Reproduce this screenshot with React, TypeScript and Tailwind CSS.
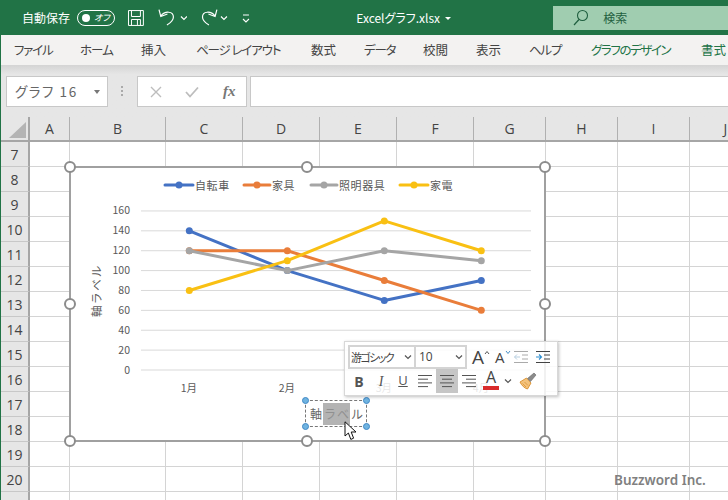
import React from "react";

const tabs = [
  { t: "ファイル", c: "w-[38px] text-[#444] tracking-[-1.2px]" },
  { t: "ホーム", c: "w-[33px] text-[#444] tracking-[-1px]" },
  { t: "挿入", c: "w-[25px] text-[#444]" },
  { t: "ページ レイアウト", c: "w-[86px] text-[#444] ml-[2px] tracking-[-1.1px]" },
  { t: "数式", c: "w-[26px] text-[#444] ml-[1px]" },
  { t: "データ", c: "w-[31px] text-[#444] -ml-[1px] tracking-[-1.2px]" },
  { t: "校閲", c: "w-[26px] text-[#444]" },
  { t: "表示", c: "w-[26px] text-[#444] -ml-[1px]" },
  { t: "ヘルプ", c: "w-[32px] text-[#444] -ml-[1px] tracking-[-1.2px]" },
  { t: "グラフのデザイン", c: "w-[80px] text-[#217346] ml-[2px] tracking-[-1.4px]" },
  { t: "書式", c: "w-[26px] text-[#217346] ml-[2px]" },
];

const cols = [
  { l: "A", w: "w-[40px]" },
  { l: "B", w: "w-[96px]" },
  { l: "C", w: "w-[77px]" },
  { l: "D", w: "w-[77px]" },
  { l: "E", w: "w-[77px]" },
  { l: "F", w: "w-[77px]" },
  { l: "G", w: "w-[72px]" },
  { l: "H", w: "w-[72px]" },
  { l: "I", w: "w-[72px]" },
  { l: "J", w: "w-[72px]" },
];
const rows = [7, 8, 9, 10, 11, 12, 13, 14, 15, 16, 17, 18, 19, 20, 21];

const X = [189.3, 287.3, 384.3, 481.3];
const yOf = (v: number) => 370 - v * 0.994;
const series = [
  { name: "自転車", color: "#4472c4", data: [140, 100, 70, 90] },
  { name: "家具", color: "#e97d3a", data: [120, 120, 90, 60] },
  { name: "照明器具", color: "#a5a5a5", data: [120, 100, 120, 110] },
  { name: "家電", color: "#f9c013", data: [80, 110, 150, 120] },
];
const legend = [
  { x1: 165, x2: 193, mx: 179, tx: 195 },
  { x1: 244, x2: 270, mx: 257, tx: 272 },
  { x1: 311, x2: 337, mx: 324, tx: 339 },
  { x1: 400, x2: 428, mx: 414, tx: 430 },
];

const handles = [
  "-left-[7px] -top-[7px]",
  "left-[230px] -top-[7px]",
  "-right-[7px] -top-[7px]",
  "-left-[7px] top-[130px]",
  "-right-[7px] top-[130px]",
  "-left-[7px] -bottom-[7px]",
  "left-[230px] -bottom-[7px]",
  "-right-[7px] -bottom-[7px]",
];
const blue = [
  "-left-[4px] -top-[4px]",
  "-right-[4px] -top-[4px]",
  "-left-[4px] -bottom-[4px]",
  "-right-[4px] -bottom-[4px]",
];

function Chevron({ className = "" }: { className?: string }) {
  return (
    <svg width="8" height="6" viewBox="0 0 8 6" className={className}>
      <path d="M1 1.5 L4 4.5 L7 1.5" fill="none" stroke="currentColor" strokeWidth="1.2" />
    </svg>
  );
}

function AlignIcon({ kind }: { kind: "left" | "center" | "right" }) {
  const lines = [
    [1, 15],
    kind === "left" ? [1, 11] : kind === "center" ? [3, 13] : [5, 15],
    [1, 15],
    kind === "left" ? [1, 11] : kind === "center" ? [3, 13] : [5, 15],
  ];
  return (
    <svg width="16" height="16" viewBox="0 0 16 16">
      {lines.map((l, i) => (
        <line key={i} x1={l[0]} x2={l[1]} y1={2.5 + i * 3.7} y2={2.5 + i * 3.7} stroke="#555" strokeWidth="1" />
      ))}
    </svg>
  );
}

export default function App() {
  return (
    <div className="relative w-[728px] h-[500px] overflow-hidden border-l border-[#217346] bg-white flex flex-col [font-family:'Noto_Sans_CJK_JP','Noto_Sans',sans-serif] [font-feature-settings:'palt']">
      {/* Title bar */}
      <div className="h-[35px] shrink-0 -ml-px bg-[#217346] flex items-center text-white relative">
        <span className="ml-[22px] text-[12px] w-[48px] whitespace-nowrap">自動保存</span>
        <div className="ml-[7px] w-[38px] h-[16px] rounded-full border border-white flex items-center pl-[4px] gap-[4px]">
          <span className="w-[8px] h-[8px] rounded-full bg-white" />
          <span className="text-[9px] italic leading-none whitespace-nowrap">オフ</span>
        </div>
        <svg width="18" height="18" viewBox="0 0 18 18" className="ml-[12px]">
          <path d="M1.5 1.5 H16.5 V16.5 H1.5 Z M4.5 1.5 V7.5 H13.5 V1.5 M4.5 16.5 V10.5 H13.5 V16.5 M10.5 11 V16" fill="none" stroke="#fff" strokeWidth="1" />
        </svg>
        <svg width="18" height="20" viewBox="0 0 18 20" className="ml-[13px]">
          <path d="M1 1.5 L2.8 8.5 L9.5 6 M2.8 8 C7 2.5 15.5 3 15.5 9 C15.5 12.5 12.5 15 9 17" fill="none" stroke="#fff" strokeWidth="1.2" />
        </svg>
        <Chevron className="ml-[4px] mt-[1px] text-white" />
        <svg width="18" height="20" viewBox="0 0 18 20" className="ml-[13px]">
          <path d="M17 1.5 L15.2 8.5 L8.5 6 M15.2 8 C11 2.5 2.5 3 2.5 9 C2.5 12.5 5.5 15 9 17" fill="none" stroke="#fff" strokeWidth="1.2" />
        </svg>
        <Chevron className="ml-[2px] mt-[1px] text-white" />
        <svg width="8" height="9" viewBox="0 0 8 9" className="ml-[14px] mt-[2px]">
          <path d="M1 1 H7 M1 5 L4 8 L7 5" fill="none" stroke="#fff" strokeWidth="1.1" />
        </svg>
        <span className="ml-[106px] text-[12px] w-[83px] whitespace-nowrap">Excelグラフ.xlsx</span>
        <span className="ml-[6px] mt-[1px] w-0 h-0 border-x-[3px] border-x-transparent border-t-[3px] border-t-white" />
        <div className="ml-[102px] w-[176px] h-[24px] bg-[#a0cdb0] flex items-center text-[#1f5f3f]">
          <svg width="16" height="18" viewBox="0 0 16 18" className="ml-[20px]">
            <circle cx="9.5" cy="6.5" r="5" fill="none" stroke="#1f5f3f" strokeWidth="1.1" />
            <path d="M6 10.5 L1 16" stroke="#1f5f3f" strokeWidth="1.2" />
          </svg>
          <span className="ml-[14px] text-[12px]">検索</span>
        </div>
      </div>

      {/* Tabs */}
      <div className="h-[30px] shrink-0 bg-[#f3f2f1] flex items-center gap-[28px] pl-[13px] text-[12.5px] whitespace-nowrap">
        {tabs.map((t) => (
          <span key={t.t} className={t.c}>
            {t.t}
          </span>
        ))}
      </div>

      {/* Formula bar */}
      <div className="h-[52px] shrink-0 bg-[#e6e6e6] bg-gradient-to-b from-[#d4d4d4] to-[#e6e6e6] to-[18%] pt-[11px] flex items-start">
        <div className="ml-[5px] w-[102px] h-[31px] bg-white border border-[#c8c8c8] flex items-center pl-[8px] pr-[7px] justify-between">
          <span className="text-[13.5px] text-[#666] tracking-[1.6px] whitespace-nowrap">グラフ 16</span>
          <span className="w-0 h-0 border-x-[3.5px] border-x-transparent border-t-[4px] border-t-[#777]" />
        </div>
        <div className="ml-[13px] mt-[10px] flex flex-col gap-[2px]">
          <span className="w-[2px] h-[2px] bg-[#aaa]" />
          <span className="w-[2px] h-[2px] bg-[#aaa]" />
          <span className="w-[2px] h-[2px] bg-[#aaa]" />
        </div>
        <div className="ml-[14px] w-[110px] h-[31px] bg-white border border-[#c8c8c8] flex items-center">
          <svg width="12" height="12" viewBox="0 0 12 12" className="ml-[12px]">
            <path d="M1 1 L11 11 M11 1 L1 11" stroke="#bdbdbd" strokeWidth="1.4" />
          </svg>
          <svg width="14" height="12" viewBox="0 0 14 12" className="ml-[23px]">
            <path d="M1 6 L5 10.5 L13 1.5" fill="none" stroke="#bdbdbd" strokeWidth="1.8" />
          </svg>
          <span className="ml-[24px] text-[15px] italic font-bold text-[#777] [font-family:'Liberation_Serif',serif]">fx</span>
        </div>
        <div className="ml-[3px] flex-1 h-[31px] bg-white border border-[#c8c8c8] border-r-0" />
      </div>

      {/* Sheet */}
      <div className="flex-1 flex flex-col overflow-hidden text-[#444] [font-family:'Open_Sans',sans-serif]">
        <div className="h-[25px] shrink-0 flex bg-[#e6e6e6] border-b-2 border-[#a6a6a6]">
          <div className="w-[29px] shrink-0 border-r-2 border-[#a6a6a6] relative">
            <svg width="18" height="16" viewBox="0 0 18 16" className="absolute left-[8px] top-[5px]">
              <path d="M17 0 V16 H0 Z" fill="#b4b4b4" />
            </svg>
          </div>
          {cols.map((c) => (
            <div key={c.l} className={`${c.w} shrink-0 border-r border-[#b0b0b0] flex items-center justify-center text-[14px]`}>
              {c.l}
            </div>
          ))}
        </div>
        {rows.map((r) => (
          <div key={r} className="h-[25px] shrink-0 flex">
            <div className="w-[29px] shrink-0 bg-[#e6e6e6] border-r-2 border-b border-b-[#c8c8c8] border-r-[#a6a6a6] flex items-center justify-center text-[14px]">
              {r}
            </div>
            {cols.map((c) => (
              <div key={c.l} className={`${c.w} shrink-0 border-r border-b border-[#d4d4d4]`} />
            ))}
          </div>
        ))}
      </div>

      {/* Chart */}
      <div className="absolute left-[68px] top-[166px] w-[477px] h-[276px] bg-white border-2 border-[#a0a0a0]">
        <svg width="473" height="272" viewBox="71 168 473 272" className="block">
          {[0, 20, 40, 60, 80, 100, 120, 140, 160].map((v) => (
            <g key={v}>
              <line x1="141" x2="531" y1={yOf(v)} y2={yOf(v)} stroke="#d9d9d9" strokeWidth="1" />
              <text x="130" y={yOf(v) + 3.5} textAnchor="end" fontSize="10.5" fill="#595959">
                {v}
              </text>
            </g>
          ))}
          {series.map((s) => (
            <g key={s.name}>
              <polyline
                points={s.data.map((v, i) => `${X[i]},${yOf(v)}`).join(" ")}
                fill="none"
                stroke={s.color}
                strokeWidth="3"
                strokeLinecap="round"
                strokeLinejoin="round"
              />
              {s.data.map((v, i) => (
                <circle key={i} cx={X[i]} cy={yOf(v)} r="3.5" fill={s.color} />
              ))}
            </g>
          ))}
          {series.map((s, i) => (
            <g key={s.name}>
              <line x1={legend[i].x1} x2={legend[i].x2} y1="185" y2="185" stroke={s.color} strokeWidth="3" strokeLinecap="round" />
              <circle cx={legend[i].mx} cy="185" r="3.5" fill={s.color} />
              <text x={legend[i].tx} y="189.5" fontSize="11" letterSpacing="0.6" fill="#595959">
                {s.name}
              </text>
            </g>
          ))}
          {["1月", "2月", "3月", "4月"].map((m, i) => (
            <text key={m} x={X[i] - 0.5} y="392" textAnchor="middle" fontSize="10.5" fill="#595959">
              {m}
            </text>
          ))}
          <text x="0" y="0" transform="translate(101 317) rotate(-90)" fontSize="11.5" letterSpacing="2.4" fill="#595959">
            軸ラベル
          </text>
        </svg>
        {handles.map((h) => (
          <span key={h} className={`absolute ${h} w-[12px] h-[12px] rounded-full bg-white border-2 border-[#8c8c8c]`} />
        ))}
      </div>

      {/* Axis title being edited */}
      <div className="absolute left-[304px] top-[400px] w-[62px] h-[27px] border border-dashed border-[#777] flex items-center pl-[4px] text-[12px] tracking-[1px] text-[#666] whitespace-nowrap [font-feature-settings:normal]">
        <span>軸</span>
        <span className="h-[22px] leading-[22px] bg-[#b3b3b3] text-[#909090] pl-[1px]">ラベ</span>
        <span className="pl-[1px]">ル</span>
        {blue.map((b) => (
          <span key={b} className={`absolute ${b} w-[7px] h-[7px] rounded-full bg-[#6fb3e0] border border-[#3f88c5]`} />
        ))}
      </div>

      {/* Mini toolbar */}
      <div className="absolute left-[343px] top-[341px] w-[214px] h-[55px] bg-white/85 border border-[#d8d8d8] shadow-[1px_1px_3px_rgba(0,0,0,0.25)] pt-[3px] pl-[3px] text-[#444]">
        <div className="flex h-[24px] items-stretch">
          <div className="w-[68px] border-2 border-[#d4d4d4] flex items-center justify-between pl-[1px] pr-[2px] text-[11px] tracking-[-1.6px] whitespace-nowrap">
            <span>游ゴシック</span>
            <Chevron className="text-[#555]" />
          </div>
          <div className="w-[51px] border-2 border-l-0 border-[#d4d4d4] flex items-center justify-between pl-[3px] pr-[2px] text-[12px] [font-family:'Open_Sans',sans-serif]">
            <span>10</span>
            <Chevron className="text-[#555]" />
          </div>
          <div className="flex items-center">
            <span className="ml-[5px] text-[19px] leading-none [font-family:'Open_Sans',sans-serif]">A</span>
            <svg width="6" height="5" viewBox="0 0 6 5" className="mb-[10px] mr-[5px]">
              <path d="M1 4 L3 1.5 L5 4" fill="none" stroke="#555" strokeWidth="1" />
            </svg>
            <span className="text-[15px] leading-none [font-family:'Open_Sans',sans-serif]">A</span>
            <svg width="6" height="5" viewBox="0 0 6 5" className="mb-[10px] mr-[2px]">
              <path d="M1 1 L3 3.5 L5 1" fill="none" stroke="#4a90c8" strokeWidth="1" />
            </svg>
            <svg width="16" height="14" viewBox="0 0 16 14" className="mr-[6px]">
              <path d="M1 1.5 H15 M9 5 H15 M9 9 H15 M1 12.5 H15" stroke="#aaa" strokeWidth="1" />
              <path d="M7 7 H1.5 M4 4.5 L1.5 7 L4 9.5" fill="none" stroke="#b8cfe0" strokeWidth="1" />
            </svg>
            <svg width="16" height="14" viewBox="0 0 16 14">
              <path d="M1 1.5 H15 M9 5 H15 M9 9 H15 M1 12.5 H15" stroke="#444" strokeWidth="1" />
              <path d="M1 7 H6.5 M4 4.5 L6.5 7 L4 9.5" fill="none" stroke="#2f8fd0" strokeWidth="1.1" />
            </svg>
          </div>
        </div>
        <div className="flex h-[24px] items-stretch">
          <span className="w-[22px] flex items-center justify-center text-[14px] font-bold text-[#555] [font-family:'Open_Sans',sans-serif]">B</span>
          <span className="w-[22px] flex items-center justify-center text-[14px] italic text-[#555] [font-family:'Liberation_Serif',serif]">I</span>
          <span className="w-[22px] flex items-center justify-center text-[13px] underline text-[#555] [font-family:'Open_Sans',sans-serif]">U</span>
          <span className="w-[22px] flex items-center justify-center"><AlignIcon kind="left" /></span>
          <span className="w-[22px] flex items-center justify-center bg-[#c6c6c6]"><AlignIcon kind="center" /></span>
          <span className="w-[22px] flex items-center justify-center"><AlignIcon kind="right" /></span>
          <span className="w-[22px] flex flex-col items-center">
            <span className="text-[16px] leading-[17px] [font-family:'Open_Sans',sans-serif]">A</span>
            <span className="w-[16px] h-[4px] bg-[#d92b2b]" />
          </span>
          <span className="w-[12px] flex items-center justify-center"><Chevron className="text-[#555]" /></span>
          <span className="w-[28px] flex items-center justify-center">
            <svg width="18" height="18" viewBox="0 0 18 18">
              <path d="M1 10 L7.5 6 L12 11 L8.5 17 C6 16.5 2.5 13.5 1 10 Z" fill="#f3c27c" stroke="#d98e2b" strokeWidth="0.9" />
              <path d="M3.5 11.5 L7 15 M5.5 10 L9 13.5" stroke="#d98e2b" strokeWidth="0.7" />
              <path d="M8.5 6.5 L11.5 9.5 L17 3 L15 1 Z" fill="#8b8b8b" stroke="#666" strokeWidth="0.6" />
            </svg>
          </span>
        </div>
      </div>

      {/* Mouse pointer */}
      <svg width="14" height="20" viewBox="0 0 14 20" className="absolute left-[343px] top-[421px]">
        <path d="M1 0.8 L1 15 L4.4 12 L6.8 18.4 L9.6 17.2 L7.2 11 L12 11 Z" fill="#fff" stroke="#111" strokeWidth="1" />
      </svg>

      {/* Watermark */}
      <span className="absolute left-[613px] top-[470px] text-[13.5px] leading-[20px] font-semibold text-[#808080] [font-family:'Noto_Sans',sans-serif]">
        Buzzword Inc.
      </span>
    </div>
  );
}
